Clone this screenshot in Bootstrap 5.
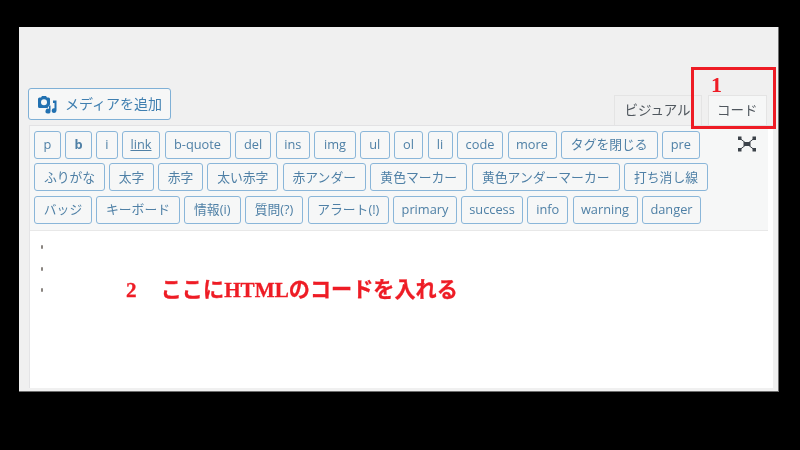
<!DOCTYPE html>
<html lang="ja">
<head>
<meta charset="utf-8">
<title>コードエディタ</title>
<link href="https://cdn.jsdelivr.net/npm/bootstrap@5.3.0/dist/css/bootstrap.min.css" rel="stylesheet">
<style>
html,body{width:800px;height:450px;margin:0;overflow:hidden;background:#000;}
body{font-family:"Open Sans","Noto Sans CJK JP",sans-serif;padding:27px 22px 59px 19px;}
.screen{width:759.5px;height:364.5px;background:#f0f0f0;padding:60px 0 0 10px;filter:blur(.4px);position:relative;box-shadow:inset -1px -1px 0 #6e6e6e;}
.media-btn{height:32.5px;width:142.5px;margin:0 0 5px -1px;border:1.5px solid #7fb0d6;border-radius:3px;background:#f6f7f7;color:#3f7fb0;font-size:14px;display:flex;align-items:center;padding:0 0 0 9px;gap:7px;}
.tabs-line{height:38px;width:738px;}
.tab-v,.tab-c{height:30.5px;font-size:13.5px;color:#50575e;display:flex;align-items:center;justify-content:center;border:1px solid #e4e4e4;border-bottom:0;}
.tab-v{width:88px;background:#f0f0f0;margin-right:6px;}
.tab-c{width:59.5px;background:#f6f7f7;}
.box{width:743.5px;height:262.5px;border-top:1px solid #e2e2e4;border-left:1px solid #e4e4e6;background:#fff;}
.tools{height:105px;width:737.5px;background:#f6f7f7;border-bottom:1px solid #e8e8e8;padding:4.5px 0 0 4px;position:relative;}
.tool-row{display:flex;gap:4.25px;margin-bottom:4.5px;}
.tb{height:28px;border:1.5px solid #8ab6d9;border-radius:3px;background:#f6f7f7;color:#4f80a6;font-size:12.8px;line-height:1;padding:0;display:flex;align-items:center;justify-content:center;white-space:nowrap;}
.tb-u{text-decoration:underline;}
.w21{width:21.5px}.w25{width:25px}.w26{width:26.5px}.w27{width:27px}.w29{width:29.5px}.w34{width:34.5px}.w36{width:36.5px}.w37{width:37.5px}.w38{width:38.5px}.w40{width:41.5px}.w41{width:41px}.w44{width:44.5px}.w45{width:45px}.w46{width:46.5px}.w49{width:49px}.w56{width:56.5px}.w58{width:58px}.w585{width:58.5px}.w595{width:59.5px}.w62{width:62px}.w63{width:63.5px}.w65{width:65px}.w66{width:66px}.w71{width:71px}.w81{width:81.5px}.w83{width:83.5px}.w97{width:97px}.w148{width:148.5px}
.expand{position:absolute;left:707px;top:10px;}
.code-area{padding:14px 0 0 11px;height:150px;position:relative;}
.dot{width:2px;height:4px;background:#8a8580;border-radius:1px;margin-bottom:17.5px;}
.note-2{position:absolute;left:96px;top:47px;color:#ee1c25;font-family:"Liberation Serif","Noto Sans CJK JP",serif;font-weight:700;font-size:21.15px;line-height:24px;white-space:pre;-webkit-text-stroke:.3px #ee1c25;}
.note-num{margin-right:3px;}
.note-frame{position:absolute;left:672px;top:40px;width:85px;height:61.5px;border:3px solid #ee1c25;}
.note-1{position:absolute;left:692px;top:45px;color:#ee1c25;font-family:"Liberation Serif",serif;font-weight:700;font-size:22px;line-height:26px;}
</style>
</head>
<body>
<div class="screen">
  <div class="d-flex justify-content-between align-items-end tabs-line">
    <button type="button" class="media-btn">
      <svg width="20" height="20" viewBox="0 0 20 20" aria-hidden="true"><path fill="#2271b1" fill-rule="evenodd" d="M1.500 3.500H3L4 2h4l1 1.500h1.500A1.500 1.500 0 0 1 12 5v5.500l-2.500 3.500h-8A1.500 1.500 0 0 1 0 12.500V5a1.500 1.500 0 0 1 1.500-1.500zM6 5.200a3 3 0 1 0 0 6 3 3 0 0 0 0-6z"/><path fill="#2271b1" d="M15 6.500h3.500V16.500a2.400 2.400 0 1 1-2-2.300V9H15zM11 11.500h1.500V17a2.500 2.500 0 1 1-1.500-2.200z"/></svg>
      <span>メディアを追加</span>
    </button>
    <div class="d-flex tabs-pair"><div class="tab-v">ビジュアル</div><div class="tab-c">コード</div></div>
  </div>
  <div class="box">
    <div class="tools">
      <div class="tool-row">
        <button class="tb w27">p</button><button class="tb w26 fw-bold">b</button><button class="tb w21">i</button><button class="tb w38 tb-u">link</button><button class="tb w66">b-quote</button><button class="tb w36">del</button><button class="tb w34">ins</button><button class="tb w40">img</button><button class="tb w29">ul</button><button class="tb w29">ol</button><button class="tb w25">li</button><button class="tb w46">code</button><button class="tb w49">more</button><button class="tb w97">タグを閉じる</button><button class="tb w37">pre</button>
      </div>
      <div class="tool-row">
        <button class="tb w71">ふりがな</button><button class="tb w44">太字</button><button class="tb w45">赤字</button><button class="tb w71">太い赤字</button><button class="tb w83">赤アンダー</button><button class="tb w97">黄色マーカー</button><button class="tb w148">黄色アンダーマーカー</button><button class="tb w83">打ち消し線</button>
      </div>
      <div class="tool-row">
        <button class="tb w58">バッジ</button><button class="tb w83">キーボード</button><button class="tb w56">情報(i)</button><button class="tb w585">質問(?)</button><button class="tb w81">アラート(!)</button><button class="tb w63">primary</button><button class="tb w62">success</button><button class="tb w41">info</button><button class="tb w65">warning</button><button class="tb w595">danger</button>
      </div>
      <svg class="expand" width="20" height="16" viewBox="0 0 20 16" aria-hidden="true"><g fill="#3c434a"><rect x="1" y="0.500" width="3.500" height="3.500"/><rect x="15.500" y="0.500" width="3.500" height="3.500"/><rect x="1" y="12" width="3.500" height="3.500"/><rect x="15.500" y="12" width="3.500" height="3.500"/><rect x="6.500" y="6" width="7" height="4"/></g><path d="M3 2.500l14 11M17 2.500l-14 11" stroke="#3c434a" stroke-width="1"/></svg>
    </div>
    <div class="code-area">
      <div class="dot"></div><div class="dot"></div><div class="dot"></div>
      <div class="note-2"><span class="note-num">2</span>　ここにHTMLのコードを入れる</div>
    </div>
  </div>
  <div class="note-frame"></div>
  <div class="note-1">1</div>
</div>
<script src="https://cdn.jsdelivr.net/npm/bootstrap@5.3.0/dist/js/bootstrap.bundle.min.js"></script>
</body>
</html>
